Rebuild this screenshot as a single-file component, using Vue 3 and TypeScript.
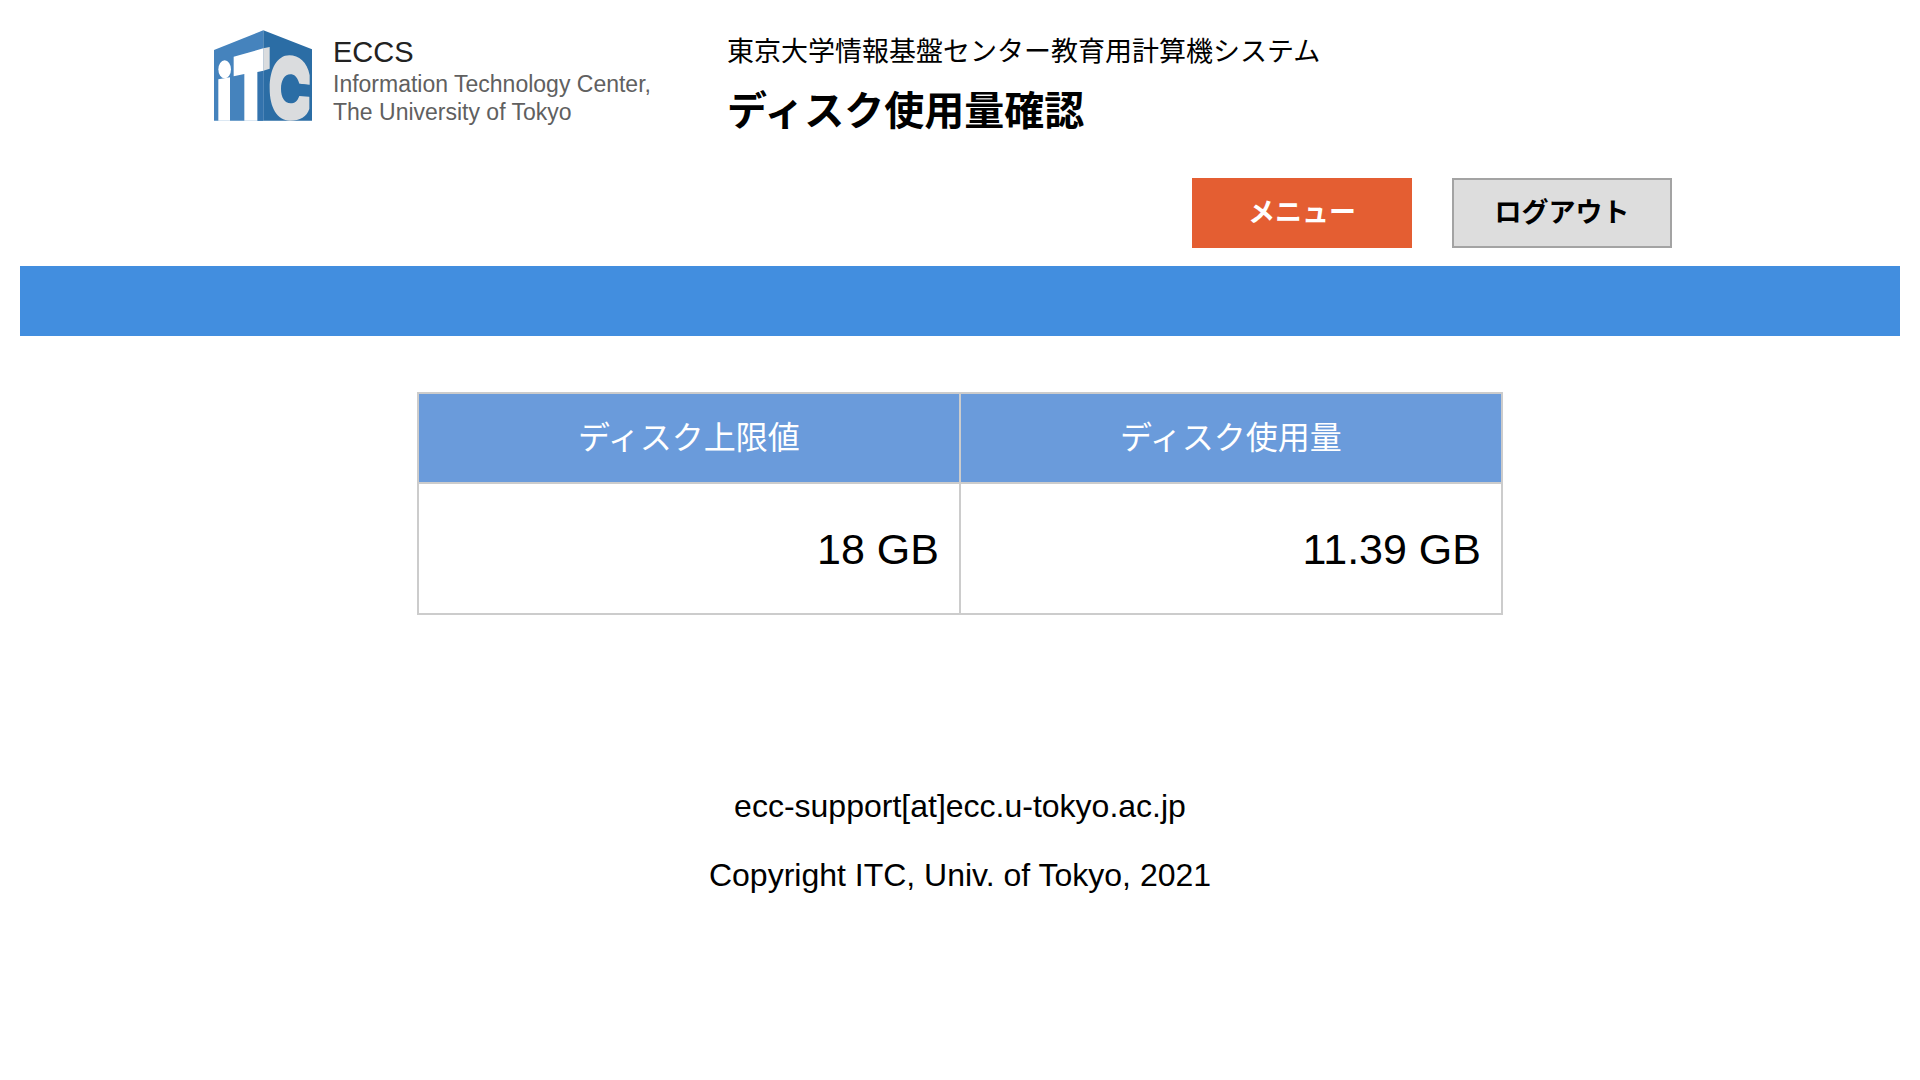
<script setup lang="ts">
interface DiskColumn {
  label: string
  value: string
}

const columns: DiskColumn[] = [
  { label: 'ディスク上限値', value: '18 GB' },
  { label: 'ディスク使用量', value: '11.39 GB' },
]
</script>

<template>
  <div class="page">
    <header class="header">
      <div class="brand">
        <svg class="mark" viewBox="42 42 294 273" role="img" aria-label="ITC">
          <path d="M42 102 190 43V314H42Z" fill="#4583bd" />
          <path d="M190 43 336 100V314H190Z" fill="#2b6da5" />
          <path d="M172 168 190 164V314H172Z" fill="#3373ad" />
          <ellipse cx="74" cy="160" rx="19" ry="27" fill="#fff" />
          <path d="M55 190 90 184V314H55Z" fill="#fff" />
          <path d="M101 122 190 97V164L172 168V314H133V174L101 181Z" fill="#fff" />
          <path d="M190 97 209 93V158L190 164Z" fill="#dadcde" />
          <path
            d="M329 178C322 138 296 118 268 118C232 118 209 158 209 216C209 276 232 314 270 314C300 314 321 302 328 278V240H298C292 256 284 262 272 262C254 262 243 244 243 219C243 193 254 175 271 175C283 175 291 181 298 203L329 208Z"
            fill="#dadcde"
          />
          <path d="M298 203 336 207V243L298 240Z" fill="#2b6da5" />
        </svg>
        <div class="brand-text">
          <div class="brand-name">ECCS</div>
          <div class="brand-line">Information Technology Center,</div>
          <div class="brand-line">The University of Tokyo</div>
        </div>
      </div>
      <div class="titles">
        <p class="system">東京大学情報基盤センター教育用計算機システム</p>
        <h1 class="title">ディスク使用量確認</h1>
      </div>
    </header>

    <nav class="actions">
      <button type="button" class="btn btn-menu">メニュー</button>
      <button type="button" class="btn btn-logout">ログアウト</button>
    </nav>

    <div class="bar"></div>

    <table class="usage">
      <thead>
        <tr>
          <th v-for="c in columns" :key="c.label" scope="col">{{ c.label }}</th>
        </tr>
      </thead>
      <tbody>
        <tr>
          <td v-for="c in columns" :key="c.label">{{ c.value }}</td>
        </tr>
      </tbody>
    </table>

    <footer class="footer">
      <p>ecc-support[at]ecc.u-tokyo.ac.jp</p>
      <p>Copyright ITC, Univ. of Tokyo, 2021</p>
    </footer>
  </div>
</template>

<style>
body {
  margin: 0;
  background: #fff;
}
</style>

<style scoped>
.page {
  padding: 0 20px;
  color: #000;
  font-family: "Liberation Sans", "Noto Sans CJK JP", sans-serif;
}

.header,
.actions {
  box-sizing: border-box;
  max-width: 1500px;
  margin: 0 auto;
  padding: 0 38px 0 4px;
  display: flex;
}

.header {
  height: 178px;
  padding-top: 30px;
  align-items: flex-start;
}

.brand {
  display: flex;
  width: 513px;
  flex: none;
}

.mark {
  width: 98px;
  height: 91px;
  margin-right: 21px;
  flex: none;
}

.brand-text {
  padding-top: 4px;
  white-space: nowrap;
}

.brand-name {
  font-size: 29px;
  line-height: 36px;
  color: #222;
}

.brand-line {
  font-size: 23px;
  line-height: 28px;
  color: #606060;
}

.titles {
  font-family: "Noto Sans CJK JP", sans-serif;
  white-space: nowrap;
}

.system {
  margin: 0;
  font-size: 27px;
  line-height: 40px;
}

.title {
  margin: 8px 0 0;
  font-size: 40px;
  line-height: 60px;
  font-weight: 700;
}

.actions {
  justify-content: flex-end;
  gap: 40px;
}

.btn {
  box-sizing: border-box;
  width: 220px;
  height: 70px;
  padding: 0 0 6px;
  border: 2px solid #e45e32;
  font-family: "Noto Sans CJK JP", sans-serif;
  font-size: 27px;
  font-weight: 700;
  cursor: pointer;
}

.btn-menu {
  background: #e45e32;
  color: #fff;
}

.btn-logout {
  background: #ddd;
  border-color: #a3a3a3;
  color: #000;
}

.bar {
  height: 70px;
  margin-top: 18px;
  background: #428edf;
}

.usage {
  width: 100%;
  max-width: 1086px;
  margin: 56px auto 0;
  table-layout: fixed;
  border-collapse: separate;
  border-spacing: 2px;
  background: #ccc;
}

.usage th {
  height: 88px;
  padding: 0;
  background: #6a9bdb;
  color: #fff;
  font-size: 32px;
  line-height: 48px;
  font-weight: 400;
}

.usage td {
  height: 129px;
  padding: 0 20px;
  background: #fff;
  font-size: 43px;
  line-height: 52px;
  text-align: right;
}

.footer {
  margin-top: 171px;
  text-align: center;
  font-size: 32px;
  line-height: 40px;
}

.footer p {
  margin: 0 0 29px;
}
</style>
